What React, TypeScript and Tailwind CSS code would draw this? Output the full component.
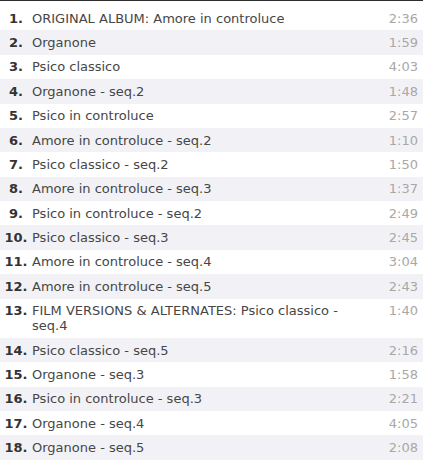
import React from 'react';

const tracks: [string, string][] = [
  ['ORIGINAL ALBUM: Amore in controluce', '2:36'],
  ['Organone', '1:59'],
  ['Psico classico', '4:03'],
  ['Organone - seq.2', '1:48'],
  ['Psico in controluce', '2:57'],
  ['Amore in controluce - seq.2', '1:10'],
  ['Psico classico - seq.2', '1:50'],
  ['Amore in controluce - seq.3', '1:37'],
  ['Psico in controluce - seq.2', '2:49'],
  ['Psico classico - seq.3', '2:45'],
  ['Amore in controluce - seq.4', '3:04'],
  ['Amore in controluce - seq.5', '2:43'],
  ['FILM VERSIONS & ALTERNATES: Psico classico - seq.4', '1:40'],
  ['Psico classico - seq.5', '2:16'],
  ['Organone - seq.3', '1:58'],
  ['Psico in controluce - seq.3', '2:21'],
  ['Organone - seq.4', '4:05'],
  ['Organone - seq.5', '2:08'],
];

export default function App() {
  return (
    <div className="w-[423px] h-[462px] bg-white overflow-hidden font-['DejaVu_Sans',Verdana,sans-serif] text-[13px] leading-[15px]">
      <div className="h-px bg-[#2e2e2e]" />
      <ol className="pt-[5px]">
        {tracks.map(([title, time], i) => (
          <li
            key={i}
            className={`flex py-[4.7px] ${i % 2 === 1 ? 'bg-[#f2f2f6]' : 'bg-white'}`}
          >
            <span className="w-[32px] shrink-0 text-center font-bold text-[#333]">{i + 1}.</span>
            <span className="flex-1 pr-2 text-[#464646]">{title}</span>
            <span className="w-[46px] shrink-0 pr-[5px] box-content text-right text-[#a8a8a8]">{time}</span>
          </li>
        ))}
      </ol>
    </div>
  );
}
